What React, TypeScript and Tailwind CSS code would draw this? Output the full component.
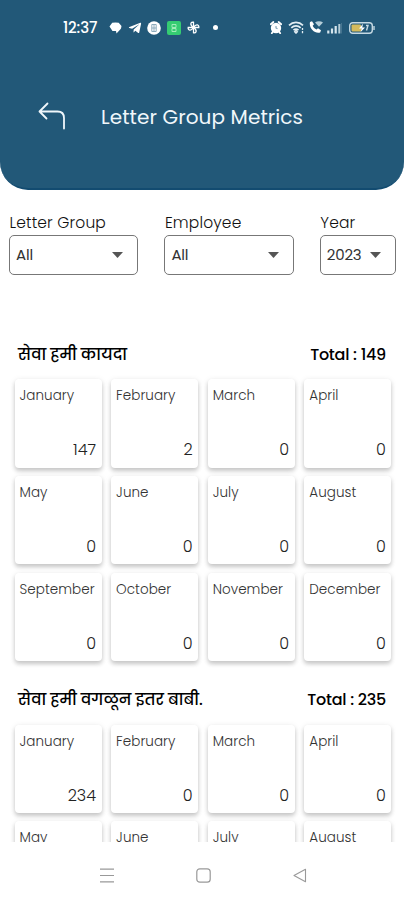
import { FaTelegramPlane } from "react-icons/fa";

const months = [
  "January",
  "February",
  "March",
  "April",
  "May",
  "June",
  "July",
  "August",
  "September",
  "October",
  "November",
  "December",
];

function StatusBar() {
  return (
    <div className="flex h-[55px] items-center justify-between pr-[28px] pl-[63px] text-white">
      <div className="flex items-center">
        <span className="w-[35px] text-[15px] leading-none font-medium tracking-[-0.15px]">12:37</span>
        <svg className="ml-[11px]" width="13" height="12" viewBox="0 0 13 12" fill="currentColor">
          <path d="M3.2.8Q6.5 0 9.7.8L12.5 4 12 6.5 11 7.8 7.5 11.5 7 9H3.5L.5 4.5z" />
        </svg>
        <FaTelegramPlane className="ml-[6px]" size={14} />
        <svg className="ml-[5px]" width="14" height="14" viewBox="0 0 14 14">
          <circle cx="7" cy="7" r="6.8" fill="currentColor" />
          <path d="M4.8 3.5h4.4v7H4.8zM4.8 7h4.4M7 3.5v7" fill="none" stroke="#8dabbc" />
        </svg>
        <svg className="ml-[6px]" width="14" height="14" viewBox="0 0 14 14">
          <rect width="14" height="14" rx="2" fill="#35cc72" />
          <path d="M5 3.5h4v3H5zM5 7.5h4v3H5z" fill="none" stroke="#a0ecb8" />
        </svg>
        <svg className="ml-[6px]" width="13" height="13" viewBox="0 0 13 13" fill="none" stroke="currentColor" strokeWidth="1.3">
          <path d="M6.5 6.5V1.2C3.7.7 2.3 3.8 6.5 6.5h5.3c.5-2.8-2.6-4.2-5.3 0v5.3c2.8.5 4.2-2.6 0-5.3H1.2C.7 9.3 3.8 10.7 6.5 6.5z" />
        </svg>
        <span className="ml-[13px] size-[5px] rounded-full bg-white" />
      </div>
      <div className="flex items-center">
        <svg width="12" height="13" viewBox="0 0 12 13">
          <circle cx="6" cy="7" r="5.2" fill="currentColor" />
          <path d="M.8 3.2L3.4 1M11.2 3.2L8.6 1M2.8 10.8l-1 1.4M9.2 10.8l1 1.4" stroke="currentColor" strokeWidth="1.8" strokeLinecap="round" />
          <path d="M6 5V7l1.5.8" fill="none" stroke="#7d9fb2" strokeWidth="1.1" />
        </svg>
        <svg className="ml-[6px]" width="17" height="13" viewBox="0 0 17 13" fill="none" stroke="#e3eef4" strokeWidth="1.7">
          <path d="M1 4.3c4-3.8 10-3.8 14 0M3.3 6.8c2.7-2.5 6.7-2.5 9.4 0M5.5 9.2c1.5-1.4 3.5-1.4 5 0" />
          <path d="M8 9.3l1.4 1.5L8 12.2l-1.4-1.4zM14.5 7v2M14.5 10v2.2" strokeWidth="1.3" />
        </svg>
        <svg className="ml-[4px]" width="14" height="13" viewBox="0 0 14 13">
          <path d="M1 1l2-.8 2 3-1.3 1.5c.8 1.8 2 3 3.8 3.8L9 7.2l3 2-.8 2.3C6 13.5-.5 7 1 1z" fill="currentColor" />
          <path d="M6 1.5L10 5.8l4-4.3c-2.2-1.6-5.8-1.6-8 0z" fill="#b5ced9" />
        </svg>
        <svg className="ml-[4px]" width="15" height="12" viewBox="0 0 15 12">
          <path d="M1.3 8.5v3M5 6.5v5M8.7 4v7.5" stroke="#d5e5ed" strokeWidth="2.2" />
          <path d="M12.3 2v9.5" stroke="#b5ced9" strokeWidth="2" />
          <path d="M14.5 1v10.5" stroke="#45748f" strokeWidth="1" />
        </svg>
        <svg className="mr-[1px] ml-[7px]" width="26" height="12" viewBox="0 0 26 12">
          <rect x=".7" y=".7" width="22.6" height="10.6" rx="3" fill="none" stroke="#c5d9e3" strokeWidth="1.4" />
          <rect x="2.5" y="2.5" width="9.5" height="7" rx="1" fill="#d4bb5d" />
          <path d="M14 1.8L10 6.5h2.5l-1 3.7 4.5-4.7h-2.7z" fill="white" />
          <path d="M17 3.5h2l-1.5 5M25 4v4" fill="none" stroke="#c5d9e3" strokeWidth="1.4" />
        </svg>
      </div>
    </div>
  );
}

function Header() {
  return (
    <header className="h-[190px] shrink-0 rounded-b-[28px] border-b-2 border-[#124b70] bg-[#225878]">
      <StatusBar />
      <div className="flex h-[121px] items-center pl-[38px] text-[#f0f7fb]">
        <svg width="29" height="28" viewBox="0 0 29 28" fill="none" stroke="currentColor" strokeWidth="1.8" strokeLinecap="round" strokeLinejoin="round">
          <path d="M9.5 1.5L1.5 9.5l7 7M1.5 9.5H19.5q6.5 0 6.5 6.5v10.5" />
        </svg>
        <h1 className="mt-[3px] ml-[34px] text-[20px] leading-none tracking-[0.1px] whitespace-nowrap">Letter Group Metrics</h1>
      </div>
    </header>
  );
}

function SelectField({ label, value, width }: { label: string; value: string; width: string }) {
  return (
    <div className={width}>
      <div className="h-[24px] pt-[1px] pl-[0.5px] text-[15.5px] leading-[22px] font-light tracking-[0.15px] whitespace-nowrap text-[#111]">{label}</div>
      <div className="flex h-[40px] items-center justify-between rounded-[5px] border border-[#777] pt-[2px] pr-[14px] pl-[6px] text-[15px] tracking-[-0.2px] text-[#333]">
        <span>{value}</span>
        <svg className="-mt-[2px]" width="11" height="6" viewBox="0 0 11 6" fill="#555">
          <path d="M0 0h11L5.5 6z" />
        </svg>
      </div>
    </div>
  );
}

function Group({ title, total, values }: { title: string; total: string; values: number[] }) {
  return (
    <section className="h-[345.5px] shrink-0">
      <div className="flex h-[38px] items-start justify-between px-[18px] pt-[1.5px] text-black">
        <h2 className="text-[15.7px] leading-[24px] font-medium whitespace-nowrap">{title}</h2>
        <span className="text-[16px] leading-[24px] font-medium tracking-[-0.25px]">{total}</span>
      </div>
      <div className="grid grid-cols-[repeat(4,87px)] justify-start gap-x-[9.6px] gap-y-[8.4px] pl-[14.5px]">
        {months.map((name, i) => (
          <div key={name} className="flex h-[88.5px] flex-col justify-between rounded-[4px] bg-white pt-[8px] pr-[5.5px] pb-[7.5px] pl-[5px] shadow-[0_3px_4px_rgba(0,0,0,0.18),0_1px_6px_rgba(0,0,0,0.09)]">
            <span className="text-[13.5px] leading-[18px] font-light tracking-[0.05px] whitespace-nowrap text-[#333]">{name}</span>
            <span className="text-right text-[16px] leading-[20px] font-light text-[#222]">{values[i]}</span>
          </div>
        ))}
      </div>
    </section>
  );
}

export default function App() {
  return (
    <div className="flex h-[900px] w-[404px] flex-col overflow-hidden bg-white font-[Poppins,Inter,'Noto_Sans',sans-serif]">
      <Header />
      <div className="flex h-[151px] shrink-0 items-start gap-[26px] pt-[20.6px] pl-[9px]">
        <SelectField label="Letter Group" value="All" width="w-[129.4px]" />
        <SelectField label="Employee" value="All" width="w-[129.4px]" />
        <SelectField label="Year" value="2023" width="w-[76px]" />
      </div>
      <main className="flex h-[501px] shrink-0 flex-col overflow-hidden">
        <Group title="सेवा हमी कायदा" total="Total : 149" values={[147, 2, 0, 0, 0, 0, 0, 0, 0, 0, 0, 0]} />
        <Group title="सेवा हमी वगळून इतर बाबी." total="Total : 235" values={[234, 0, 0, 0, 0, 0, 0, 0, 0, 0, 0, 0]} />
      </main>
      <nav className="flex h-[58px] shrink-0 items-center justify-center gap-[82px] pt-[9px] pl-[3px]">
        <svg width="14" height="15" viewBox="0 0 14 15" stroke="#999" strokeWidth="1.2">
          <path d="M0 1.2h14M0 7.5h14M0 13.8h14" />
        </svg>
        <svg width="15" height="15" viewBox="0 0 15 15" fill="none" stroke="#999" strokeWidth="1.2">
          <rect x=".8" y=".8" width="13.4" height="13.4" rx="3" />
        </svg>
        <svg width="14" height="15" viewBox="0 0 14 15" fill="none" stroke="#999" strokeWidth="1.1" strokeLinejoin="round">
          <path d="M12.5 1.3v12.4L1 7.5z" />
        </svg>
      </nav>
    </div>
  );
}
